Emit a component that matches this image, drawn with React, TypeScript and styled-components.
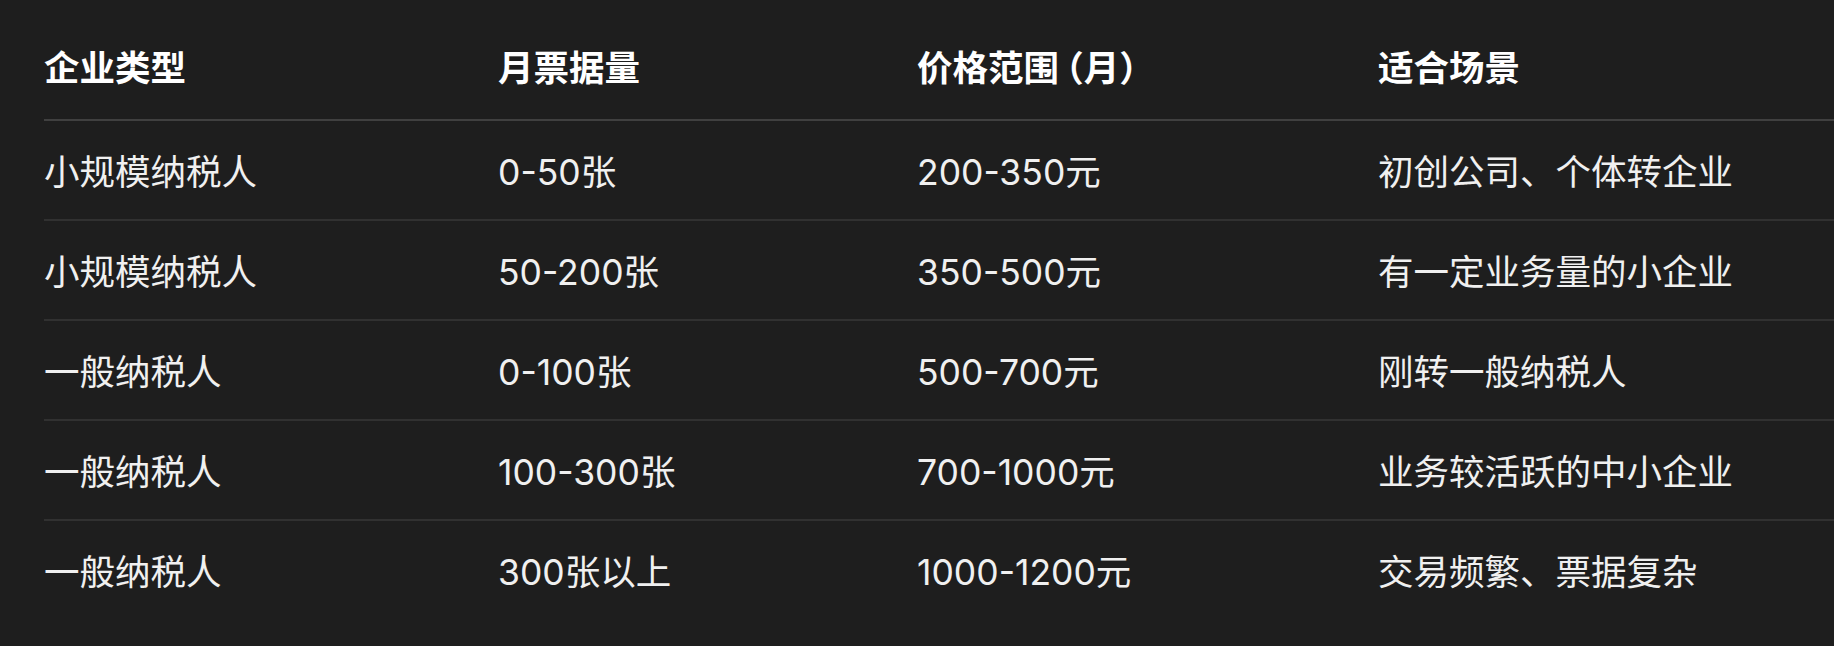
import React from 'react'
import styled, { createGlobalStyle } from 'styled-components'

const GlobalStyle = createGlobalStyle`
  html, body {
    margin: 0;
    padding: 0;
    background: #1e1e1e;
  }

  body {
    font-family: Inter, 'Noto Sans CJK SC', sans-serif;
    color: #f2f2f2;
  }
`

const Page = styled.div`
  width: 100%;
  height: 646px;
  overflow: hidden;
  padding: 24px 0 0 44px;
  box-sizing: border-box;
`

const Table = styled.table`
  width: 100%;
  border-collapse: collapse;
  table-layout: fixed;
`

const HeadCell = styled.th`
  height: 90px;
  padding: 0 0 5px;
  text-align: left;
  vertical-align: middle;
  font-size: 35.5px;
  line-height: 1;
  font-weight: 700;
  color: #ffffff;
  border-bottom: 2px solid #404040;
`

// half-width brackets, as the reference's font sets them
const Bracket = styled.span`
  margin-left: 0.2em;
  font-feature-settings: 'halt';
`

const Row = styled.tr<{ $last: boolean }>`
  border-bottom: ${(props) => (props.$last ? 'none' : '2px solid #313131')};
`

const Cell = styled.td`
  height: 93px;
  padding: 5px 0 0;
  vertical-align: middle;
  font-size: 35.5px;
  line-height: 1;
  font-weight: 400;
  color: #f0f0f0;
`

const columns: { key: string; title: React.ReactNode; width?: number }[] = [
  { key: 'type', title: '企业类型', width: 454 },
  { key: 'volume', title: '月票据量', width: 419 },
  {
    key: 'price',
    title: (
      <>
        价格范围<Bracket>（月）</Bracket>
      </>
    ),
    width: 461,
  },
  { key: 'scene', title: '适合场景' },
]

const rows = [
  ['小规模纳税人', '0-50张', '200-350元', '初创公司、个体转企业'],
  ['小规模纳税人', '50-200张', '350-500元', '有一定业务量的小企业'],
  ['一般纳税人', '0-100张', '500-700元', '刚转一般纳税人'],
  ['一般纳税人', '100-300张', '700-1000元', '业务较活跃的中小企业'],
  ['一般纳税人', '300张以上', '1000-1200元', '交易频繁、票据复杂'],
]

const App: React.FC = () => {
  return (
    <>
      <GlobalStyle />
      <Page>
        <Table>
          <colgroup>
            {columns.map((col) => (
              <col key={col.key} style={col.width ? { width: col.width } : undefined} />
            ))}
          </colgroup>
          <thead>
            <tr>
              {columns.map((col) => (
                <HeadCell key={col.key}>{col.title}</HeadCell>
              ))}
            </tr>
          </thead>
          <tbody>
            {rows.map((row, i) => (
              <Row key={i} $last={i === rows.length - 1}>
                {row.map((value, j) => (
                  <Cell key={j}>{value}</Cell>
                ))}
              </Row>
            ))}
          </tbody>
        </Table>
      </Page>
    </>
  )
}

export default App
